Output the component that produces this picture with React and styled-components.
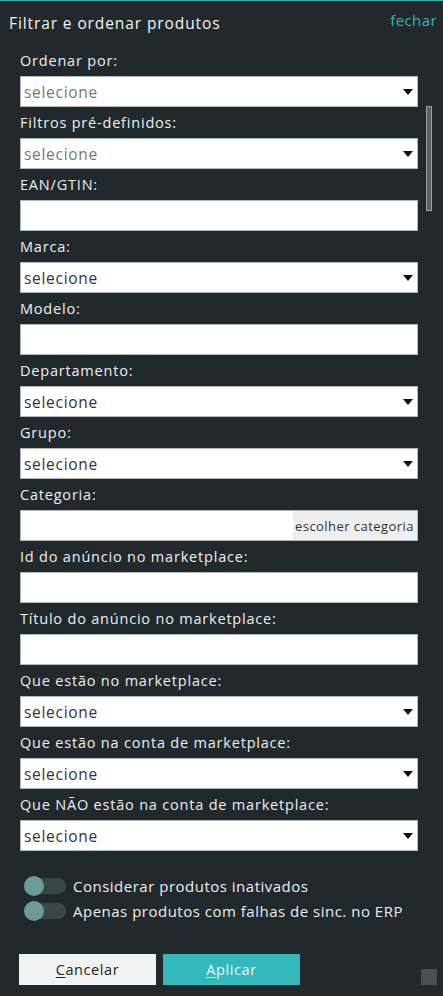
import React from 'react';
import styled, { createGlobalStyle } from 'styled-components';

const GlobalStyle = createGlobalStyle`
    html, body {
        margin: 0;
        padding: 0;
        background: #22292c;
    }
    * {
        box-sizing: border-box;
    }
`;

const Panel = styled.div`
    position: relative;
    width: 443px;
    height: 996px;
    background: #22292c;
    border-top: 1px solid #2fb5b5;
    font-family: 'Open Sans', 'Noto Sans', sans-serif;
    color: #f2f2f2;
    overflow: hidden;
`;

const Header = styled.div`
    display: flex;
    justify-content: space-between;
    align-items: flex-start;
    padding: 9px 6px 0 9px;
    height: 50px;
`;

const Title = styled.h1`
    margin: 2px 0 0;
    font-size: 15.5px;
    font-weight: 400;
    letter-spacing: 0.9px;
    color: #f4f4f4;
`;

const CloseLink = styled.a`
    font-size: 15px;
    color: #2fb5b5;
    letter-spacing: 0.4px;
    cursor: pointer;
`;

const Form = styled.div`
    display: flex;
    flex-direction: column;
    padding: 0 25px 0 20px;
`;

const Field = styled.div`
    display: flex;
    flex-direction: column;
    height: 62px;
`;

const Label = styled.label`
    font-size: 14.5px;
    line-height: 16px;
    height: 25px;
    padding-top: 2px;
    letter-spacing: 0.8px;
    color: #eeeeee;
`;

const Box = styled.div`
    position: relative;
    display: flex;
    align-items: center;
    height: 31px;
    background: #fff;
    border: 1px solid #b5b5b5;
    font-size: 15.5px;
    letter-spacing: 0.7px;
    color: ${(p) => (p.$muted ? '#777' : '#333')};
    padding-left: 3px;
`;

const Caret = styled.span`
    position: absolute;
    right: 4px;
    top: 12px;
    width: 0;
    height: 0;
    border-left: 5px solid transparent;
    border-right: 5px solid transparent;
    border-top: 6px solid #111;
`;

const PickButton = styled.span`
    margin-left: auto;
    align-self: stretch;
    display: flex;
    align-items: center;
    padding: 0 3px 0 2px;
    background: #efefef;
    font-size: 13px;
    color: #333;
    letter-spacing: 0.45px;
`;

const Toggles = styled.div`
    display: flex;
    flex-direction: column;
    gap: 6px;
    padding: 19px 0 0 24px;
`;

const ToggleRow = styled.div`
    display: flex;
    align-items: center;
    gap: 7px;
    height: 19px;
`;

const Track = styled.span`
    position: relative;
    width: 42px;
    height: 16px;
    border-radius: 8px;
    background: #3a4748;
`;

const Thumb = styled.span`
    position: absolute;
    left: 0;
    top: -2px;
    width: 20px;
    height: 20px;
    border-radius: 50%;
    background: #6b9c9c;
`;

const ToggleText = styled.span`
    font-size: 15px;
    letter-spacing: 0.5px;
    color: #eeeeee;
`;

const Actions = styled.div`
    display: flex;
    gap: 7px;
    padding: 34px 0 0 19px;
`;

const Button = styled.button`
    width: 137px;
    height: 31px;
    border: none;
    font-family: inherit;
    font-size: 14.5px;
    letter-spacing: 0.6px;
    background: ${(p) => (p.$primary ? '#33b9bb' : '#f2f2f2')};
    color: ${(p) => (p.$primary ? '#eaf7f7' : '#222')};
    u {
        text-decoration-thickness: 1px;
        text-underline-offset: 2px;
    }
`;

const Scrollbar = styled.div`
    position: absolute;
    left: 426px;
    top: 105px;
    width: 6px;
    height: 105px;
    background: #5b6163;
    border: 1px solid #a0a0a0;
`;

const Grip = styled.div`
    position: absolute;
    left: 421px;
    top: 968px;
    width: 16px;
    height: 16px;
    background: #4a4f52;
`;

const fields = [
    { label: 'Ordenar por:', type: 'select', muted: true },
    { label: 'Filtros pré-definidos:', type: 'select', muted: true },
    { label: 'EAN/GTIN:', type: 'input' },
    { label: 'Marca:', type: 'select' },
    { label: 'Modelo:', type: 'input' },
    { label: 'Departamento:', type: 'select' },
    { label: 'Grupo:', type: 'select' },
    { label: 'Categoria:', type: 'category' },
    { label: 'Id do anúncio no marketplace:', type: 'input' },
    { label: 'Título do anúncio no marketplace:', type: 'input' },
    { label: 'Que estão no marketplace:', type: 'select' },
    { label: 'Que estão na conta de marketplace:', type: 'select' },
    { label: 'Que NÃO estão na conta de marketplace:', type: 'select' },
];

function FieldControl({ type, muted }) {
    if (type === 'select') {
        return (
            <Box $muted={muted}>
                selecione
                <Caret />
            </Box>
        );
    }
    if (type === 'category') {
        return (
            <Box>
                <PickButton>escolher categoria</PickButton>
            </Box>
        );
    }
    return <Box />;
}

export default function App() {
    return (
        <Panel>
            <GlobalStyle />
            <Header>
                <Title>Filtrar e ordenar produtos</Title>
                <CloseLink>fechar</CloseLink>
            </Header>
            <Form>
                {fields.map((f) => (
                    <Field key={f.label}>
                        <Label>{f.label}</Label>
                        <FieldControl type={f.type} muted={f.muted} />
                    </Field>
                ))}
            </Form>
            <Toggles>
                <ToggleRow>
                    <Track><Thumb /></Track>
                    <ToggleText>Considerar produtos inativados</ToggleText>
                </ToggleRow>
                <ToggleRow>
                    <Track><Thumb /></Track>
                    <ToggleText>Apenas produtos com falhas de sinc. no ERP</ToggleText>
                </ToggleRow>
            </Toggles>
            <Actions>
                <Button><u>C</u>ancelar</Button>
                <Button $primary><u>A</u>plicar</Button>
            </Actions>
            <Scrollbar />
            <Grip />
        </Panel>
    );
}
